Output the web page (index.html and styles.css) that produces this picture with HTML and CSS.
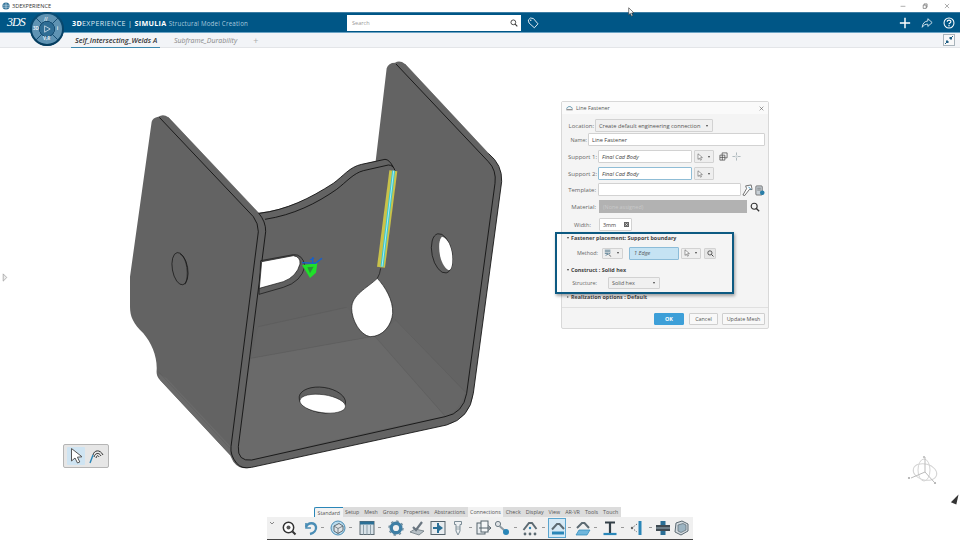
FILE: index.html
```html
<!DOCTYPE html>
<html lang="en">
<head>
  <meta charset="UTF-8" />
  <title>3DEXPERIENCE</title>
  <link rel="stylesheet" href="styles.css">
</head>
<body>

<svg class="defs" width="0" height="0">
  <symbol id="i-arrow" viewBox="0 0 10 10"><path d="M2.5 1 L2.5 8 L4.3 6.4 L5.6 9 L6.8 8.4 L5.6 5.9 L8 5.7 Z" fill="#fff" stroke="#555" stroke-width=".7"/></symbol>
  <symbol id="i-search" viewBox="0 0 12 12"><circle cx="5" cy="5" r="3.6" fill="none" stroke="#333" stroke-width="1.3"/><path d="M7.7 7.7 L11 11" stroke="#333" stroke-width="1.6"/></symbol>
</svg>

<div class="app">
  <div class="titlebar">
    <svg class="app-icon" viewBox="0 0 10 10"><circle cx="5" cy="5" r="4.5" fill="#2d6f96"/><path d="M1 4 H9 M1 6.5 H9 M5 .5 V9.5" stroke="#cfe2ee" stroke-width=".8"/></svg>
    <span class="app-name">3DEXPERIENCE</span>
    <div class="win-controls">
      <svg viewBox="0 0 10 10"><path d="M1 5.5 H9" stroke="#555" stroke-width=".8"/></svg>
      <svg viewBox="0 0 10 10"><path d="M2 3.5 H7 V9 H2 Z M3.5 3.5 V1.5 H8.5 V7 H7" fill="none" stroke="#444" stroke-width=".9"/></svg>
      <svg viewBox="0 0 10 10"><path d="M1.5 1.5 L8.5 8.5 M8.5 1.5 L1.5 8.5" stroke="#555" stroke-width=".8"/></svg>
    </div>
  </div>

  <div class="topbar">
    <span class="ds-logo">3DS</span>
    <div class="brand"><b>3D</b>EXPERIENCE <span class="pipe">|</span> <b>SIMULIA</b> <span class="app-title">Structural Model Creation</span></div>
    <div class="search">
      <span>Search</span>
      <svg class="search-icon" viewBox="0 0 12 12"><use href="#i-search"/></svg>
    </div>
    <svg class="tag-icon" viewBox="0 0 14 14"><path d="M1.5 3.5 L4 1.2 L7.5 1.8 L12.8 8 L8.6 12.6 L2.4 7 Z" fill="none" stroke="#fff" stroke-width="1"/><circle cx="4.4" cy="3.8" r=".8" fill="#fff"/></svg>
    <div class="top-actions">
      <svg viewBox="0 0 14 14"><path d="M7 1 V13 M1 7 H13" stroke="#fff" stroke-width="1.7"/></svg>
      <svg viewBox="0 0 14 14"><path d="M8 2 L13 6.5 L8 11 V8.4 C5 8.2 3 9.4 1.4 12 C1.8 7.6 4 5 8 4.6 Z" fill="none" stroke="#d4e4ee" stroke-width="1.1"/></svg>
      <svg viewBox="0 0 14 14"><circle cx="7" cy="7" r="5.8" fill="none" stroke="#fff" stroke-width="1.2"/><path d="M4.9 5.5 C4.9 3 9.2 3 9.2 5.5 C9.2 7.2 7 7 7 8.6" fill="none" stroke="#fff" stroke-width="1.3"/><circle cx="7" cy="10.3" r=".9" fill="#fff"/></svg>
    </div>
  </div>

  <div class="tabs">
    <div class="tab active">Self_Intersecting_Welds A</div>
    <div class="tab">Subframe_Durability</div>
    <span class="tab-add">+</span>
    <svg class="collapse-icon" viewBox="0 0 12 12"><rect x=".5" y=".5" width="11" height="11" fill="#f8f8f8" stroke="#a9b4bb"/><path d="M2 10 L5 7 M3 7 H5 V9 Z" stroke="#1f5f85" fill="#1f5f85"/><path d="M10 2 L7 5 M9 5 H7 V3 Z" stroke="#1f5f85" fill="#1f5f85"/></svg>
  </div>

  <div class="compass">
    <div class="compass-inner">
      <svg class="c-lines" viewBox="0 0 30 30"><path d="M4 4 L10 10 M26 4 L20 10 M4 26 L10 20 M26 26 L20 20" stroke="#174f74" stroke-width="1"/></svg>
      <span class="c-top">//</span>
      <span class="c-left">3D</span>
      <span class="c-right">i</span>
      <span class="c-bottom">V,R</span>
      <svg class="c-play" viewBox="0 0 10 10"><path d="M2 1 L9 5 L2 9 Z" fill="none" stroke="#e4eef4" stroke-width=".9"/></svg>
    </div>
  </div>

  <div class="viewport">
    <svg class="part" viewBox="0 0 1170 1290">
      <!-- silhouette -->
      <path fill="#636363" d="M65 215 Q68 203 85 200 Q100 190 115 202 L385 488 C470 480 540 445 610 400 C640 378 660 350 695 343 L737 333 L770 55 Q775 38 795 38 Q810 30 825 42 L1075 310 Q1118 345 1115 395 L1030 1030 Q1020 1105 950 1125 L365 1252 Q330 1262 310 1235 L300 1215 L90 990 Q78 980 80 960 C82 920 65 880 40 850 C10 820 0 800 0 770 L0 680 Z"/>
      <!-- floor and bends -->
      <path fill="#6a6a6a" d="M362 925 L735 858 L945 1098 Q600 1170 365 1230 Q322 1235 325 1190 Z"/>
      <path fill="#656565" d="M385 830 L650 772 L735 858 L362 925 Z"/>
      <path fill="#666" d="M735 858 L800 810 L1005 1025 Q990 1085 945 1098 Z"/>
      <path fill="#6a6a6a" d="M85 970 L110 985 L303 1190 L300 1215 L90 990 Z"/>
      <!-- faint bend lines -->
      <g fill="none" stroke="#4f4f4f" stroke-width="1.5" opacity=".45">
        <path d="M385 830 L650 772"/>
        <path d="M362 925 L735 858"/>
        <path d="M735 860 L945 1098"/>
        <path d="M795 808 L1005 1025"/>
        <path d="M85 965 L300 1195"/>
      </g>
      <!-- sheet edges -->
      <g fill="none" stroke="#0c0c0c" stroke-width="2.5">
        <path d="M88 202 L370 500 Q385 520 385 545 L303 1190 Q300 1215 320 1240 Q335 1258 365 1252 L950 1125 Q1020 1105 1030 1030 L1115 395 Q1118 345 1075 310"/>
        <path d="M385 488 Q408 515 407 545 L325 1190 Q322 1235 365 1230 L945 1100 Q1000 1090 1010 1030 L1095 400 Q1100 360 1075 335 L798 42"/>
        <path d="M388 490 C470 480 540 445 610 400 C640 378 660 350 695 343 L765 328 Q778 328 790 352"/>
        <path d="M405 508 C490 495 560 460 620 418 C650 395 670 370 700 362 L775 345 Q790 345 795 362"/>
      </g>
      <g fill="none" stroke="#4a4a4a" stroke-width="1.5">
        <path d="M115 202 L385 488"/>
        <path d="M825 42 L1075 310"/>
      </g>
      <!-- left hole -->
      <ellipse cx="150" cy="656" rx="23" ry="49" transform="rotate(-10 150 656)" fill="#616161" stroke="#111" stroke-width="2"/>
      <path d="M150 612 C172 622 178 680 165 703" fill="none" stroke="#111" stroke-width="1.8"/>
      <!-- right hole -->
      <ellipse cx="936" cy="610" rx="30" ry="60" transform="rotate(-12 936 610)" fill="#606060" stroke="#111" stroke-width="2"/>
      <path fill="#fff" d="M936 560 C956 565 969 600 967 635 C966 650 962 662 955 660 C935 650 925 610 928 580 Q930 565 936 560 Z"/>
      <!-- slot -->
      <path fill="#606060" stroke="#111" stroke-width="2" d="M392 632 L490 614 Q518 612 525 648 Q515 695 460 712 L387 733 Z"/>
      <path fill="#fff" stroke="#111" stroke-width="2" d="M395 635 L490 617 Q512 620 510 642 Q500 680 460 695 L388 715 Z"/>
      <!-- teardrop -->
      <path fill="#fff" stroke="#111" stroke-width="2" d="M742 685 C765 710 790 750 788 790 C785 825 760 860 720 860 C690 855 665 810 665 775 C665 735 710 715 742 685 Z"/>
      <path fill="none" stroke="#111" stroke-width="2" d="M752 655 Q750 672 742 685"/>
      <!-- bottom hole -->
      <ellipse cx="577" cy="1050" rx="70" ry="38" transform="rotate(8 577 1050)" fill="#606060" stroke="#111" stroke-width="2"/>
      <ellipse cx="578" cy="1061" rx="69" ry="27" transform="rotate(8 578 1061)" fill="#fff" stroke="#111" stroke-width="1.5"/>
      <!-- selected edge -->
      <path d="M790 362 L753 652" stroke="#c9c24a" stroke-width="24"/>
      <path d="M791 362 L756 650" stroke="#37c8d2" stroke-width="9"/>
      <path d="M791 362 L756 650" stroke="#c8f2f4" stroke-width="2.5"/>
      <!-- triad -->
      <path d="M516 645 L562 640 L558 668 L540 684 Z" fill="#1fe02a"/>
      <path d="M532 652 L551 650 L540 670 Z" fill="#2f8f3a"/>
      <path d="M516 638 L556 640 L576 625 M548 622 V640 M540 630 L552 624" fill="none" stroke="#1560d0" stroke-width="4"/>
    </svg>

    <svg class="edge-arrow" viewBox="0 0 6 10"><path d="M1 1 L5 5 L1 9 Z" fill="#eee" stroke="#999" stroke-width=".8"/></svg>

    <div class="select-bar">
      <div class="select-btn on"><svg viewBox="0 0 18 18"><path d="M4.5 1.5 L4.5 14 L8 11 L10.5 16 L12.8 15 L10.4 10.2 L15 9.8 Z" fill="#fff" stroke="#555" stroke-width="1"/></svg></div>
      <div class="select-btn"><svg viewBox="0 0 18 18"><path d="M6 8 C7 3 13 2 16 8 M7 10 C8 6 12 5 14 9 M9 11 C10 8 11 8 12 10" fill="none" stroke="#333" stroke-width="1"/><path d="M3 16 L6 8" stroke="#2a86b8" stroke-width="1.4"/></svg></div>
    </div>

    <svg class="robot" viewBox="0 0 40 40">
      <g fill="none" stroke="#d4d4d4">
        <ellipse cx="20" cy="20" rx="12" ry="8" transform="rotate(15 20 20)"/>
        <ellipse cx="19" cy="18" rx="6" ry="11"/>
        <path d="M20 20 V5 M20 20 L6 26 M20 20 L29 30" stroke="#bbb"/>
      </g>
      <circle cx="19" cy="5" r="1.1" fill="#bbb"/><circle cx="4" cy="26" r="1.1" fill="#aaa"/><circle cx="30" cy="31" r="1.1" fill="#aaa"/>
    </svg>
    <svg class="corner-arrow" viewBox="0 0 10 12"><path d="M9.5 .5 L1 9 L7 11.5 Z" fill="#333"/></svg>

    <div class="dialog">
      <div class="dlg-title">
        <svg viewBox="0 0 10 8"><path d="M1 5 C2 1 8 1 9 5" fill="none" stroke="#3a7f9e" stroke-width="1.2"/><path d="M.5 6.5 H9.5" stroke="#555" stroke-width="1.2"/></svg>
        <span>Line Fastener</span>
        <svg class="dlg-close" viewBox="0 0 8 8"><path d="M1 1 L7 7 M7 1 L1 7" stroke="#555" stroke-width=".9"/></svg>
      </div>

      <div class="row row-location">
        <label class="lbl lbl-loc">Location:</label>
        <div class="combo combo-loc"><span>Create default engineering connection</span><i class="caret"></i></div>
      </div>
      <div class="row row-name">
        <label class="lbl lbl-name">Name:</label>
        <div class="field field-name">Line Fastener</div>
      </div>
      <div class="row row-s1">
        <label class="lbl">Support 1:</label>
        <div class="field field-support"><em>Final Cad Body</em></div>
        <div class="pick"><svg viewBox="0 0 10 10"><use href="#i-arrow"/></svg><i class="caret"></i></div>
        <svg class="mini first" viewBox="0 0 10 10"><path d="M1 3.5 H6.5 V9 H1 Z M3.5 3.5 V1 H9 V6.5 H6.5 M1 6 H6.5 M3.7 3.5 V9" fill="none" stroke="#444" stroke-width=".8"/></svg>
        <svg class="mini" viewBox="0 0 10 10"><path d="M5 .5 V3.5 M5 6.5 V9.5 M.5 5 H3.5 M6.5 5 H9.5" stroke="#a8b3b8" stroke-width="1"/><rect x="3.8" y="3.8" width="2.4" height="2.4" fill="#ccd3d6"/></svg>
      </div>
      <div class="row row-s2">
        <label class="lbl">Support 2:</label>
        <div class="field field-support focus"><em>Final Cad Body</em></div>
        <div class="pick"><svg viewBox="0 0 10 10"><use href="#i-arrow"/></svg><i class="caret"></i></div>
      </div>
      <div class="row row-template">
        <label class="lbl">Template:</label>
        <div class="field field-template"></div>
        <svg class="mini-lg" viewBox="0 0 12 13"><path d="M1 12 L5 5 L4 2 L10 1 L11 6 L8 6 L3 12.5 Z" fill="#fff" stroke="#444" stroke-width=".8"/><path d="M7 3 L10 6" stroke="#2a86b8"/></svg>
        <svg class="mini-lg" viewBox="0 0 12 13"><rect x="2" y="2" width="7" height="10" rx="1" fill="#c8d0d6" stroke="#555" stroke-width=".8"/><path d="M3.5 4.5 H7.5 M3.5 6.5 H7.5" stroke="#555" stroke-width=".7"/><circle cx="9" cy="9.5" r="2.5" fill="#2a7ea8"/></svg>
      </div>
      <div class="row row-material">
        <label class="lbl">Material:</label>
        <div class="field-disabled">(None assigned)</div>
        <svg class="mat-search" viewBox="0 0 12 12"><use href="#i-search"/></svg>
      </div>
      <div class="row row-width">
        <label class="lbl lbl-width">Width:</label>
        <div class="field field-width"><span>3mm</span><svg viewBox="0 0 6 6"><rect width="6" height="6" fill="#666"/><path d="M1.5 1.5 L4.5 4.5 M4.5 1.5 L1.5 4.5" stroke="#fff" stroke-width=".7"/></svg></div>
      </div>

      <div class="row section row-place"><i class="tri"></i>Fastener placement: Support boundary</div>
      <div class="row row-method">
        <label class="lbl lbl-method">Method:</label>
        <div class="pick method-pick"><svg viewBox="0 0 10 10"><path d="M1 1.5 H8 M1 3.5 H8 M1 5.5 H5 M2 8 L8 5" stroke="#35617a" stroke-width=".9"/><path d="M6 7 L9 9.5" stroke="#444" stroke-width=".9"/></svg><i class="caret"></i></div>
        <div class="field-edge"><em>1 Edge</em></div>
        <div class="pick edge-pick"><svg viewBox="0 0 10 10"><use href="#i-arrow"/></svg><i class="caret"></i></div>
        <div class="find"><svg viewBox="0 0 12 12"><use href="#i-search"/></svg></div>
      </div>
      <div class="row section row-construct"><i class="tri"></i>Construct : Solid hex</div>
      <div class="row row-structure">
        <label class="lbl lbl-structure">Structure:</label>
        <div class="combo combo-structure"><span>Solid hex</span><i class="caret"></i></div>
      </div>
      <div class="row section row-real"><i class="tri closed"></i>Realization options : Default</div>

      <div class="dlg-footer">
        <button class="btn btn-ok">OK</button>
        <button class="btn btn-cancel">Cancel</button>
        <button class="btn btn-update">Update Mesh</button>
      </div>

      <div class="highlight"></div>
    </div>

    <div class="action-bar">
      <div class="action-tabs">
        <span class="a-tab on first">Standard</span>
        <span class="a-tab">Setup</span>
        <span class="a-tab">Mesh</span>
        <span class="a-tab">Group</span>
        <span class="a-tab">Properties</span>
        <span class="a-tab">Abstractions</span>
        <span class="a-tab on">Connections</span>
        <span class="a-tab">Check</span>
        <span class="a-tab">Display</span>
        <span class="a-tab">View</span>
        <span class="a-tab">AR-VR</span>
        <span class="a-tab">Tools</span>
        <span class="a-tab">Touch</span>
      </div>
      <div class="tools">
        <svg class="chev" viewBox="0 0 8 16"><path d="M2 2 L4 4 L6 2" fill="none" stroke="#888"/></svg>
        <svg class="tool m5" viewBox="0 0 16 16"><circle cx="7.5" cy="7.5" r="5.2" fill="#fff" stroke="#333" stroke-width="1.5"/><circle cx="7.5" cy="7.5" r="2" fill="#555"/><path d="M11.5 11.5 L14.5 14.5" stroke="#333" stroke-width="2"/></svg>
        <svg class="tool m5" viewBox="0 0 16 16"><path d="M4 3 V8 H9" fill="none" stroke="#4a8db5" stroke-width="1.6"/><path d="M4 7 C6 2 13 2 14 7 C14.5 10 12 13 8 14" fill="none" stroke="#4a8db5" stroke-width="2.4"/></svg>
        <i class="t-caret m1"></i>
        <svg class="tool m4" viewBox="0 0 16 16"><circle cx="8" cy="8" r="7" fill="#b9dbee" stroke="#4a8db5"/><path d="M4 6 L9 3.5 L13 6 V10.5 L8 13.5 L4 11 Z" fill="#dfe3e6" stroke="#5d6b73"/><path d="M4 6 L8 8.5 L13 6 M8 8.5 V13.5" fill="none" stroke="#5d6b73" stroke-width=".8"/></svg>
        <i class="t-caret m1"></i>
        <svg class="tool m5" viewBox="0 0 16 16"><rect x="1" y="1.5" width="14" height="13" fill="#d8e2e8" stroke="#5d6b73"/><rect x="1" y="1.5" width="14" height="3" fill="#2a6f96"/><path d="M4.5 4.5 V14.5 M8 4.5 V14.5 M11.5 4.5 V14.5" stroke="#8fa0aa"/></svg>
        <i class="t-caret m1"></i>
        <svg class="tool m5" viewBox="0 0 16 16"><circle cx="8" cy="8" r="4.8" fill="none" stroke="#3f7fa5" stroke-width="3.4"/><circle cx="8" cy="8" r="7" fill="none" stroke="#6d8b9d" stroke-width="1.4" stroke-dasharray="2.5 3"/></svg>
        <svg class="tool m5" viewBox="0 0 16 16"><path d="M1 12 L6 9 L15 11 L10 15 Z" fill="#b7c0c6" stroke="#5d6b73" stroke-width=".7"/><path d="M4 7 L7 10 L13 2" fill="none" stroke="#6a7680" stroke-width="2.2"/></svg>
        <svg class="tool m5" viewBox="0 0 16 16"><rect x="1" y="1.5" width="14" height="13" fill="#e8ecef" stroke="#56646d"/><path d="M8 3 V13 M3 8 H8" stroke="#2a6f96" stroke-width="2"/><path d="M9 5 L13 8 L9 11 Z" fill="#2a6f96"/></svg>
        <svg class="tool m4" viewBox="0 0 16 16"><path d="M4.5 1.5 H11.5 V4.5 H10 V11 L8 15 L6 11 V4.5 H4.5 Z" fill="#eef1f3" stroke="#7d8d97"/><path d="M6 7 H10 M6 9 H10" stroke="#7d8d97" stroke-width=".7"/></svg>
        <i class="t-caret m1"></i>
        <svg class="tool m2" viewBox="0 0 16 16"><rect x="1" y="3" width="8" height="11" fill="#e8ecef" stroke="#56646d"/><rect x="5" y="1" width="7" height="11" fill="#f4f6f7" stroke="#56646d"/><path d="M3 8 H15 M12 5.5 L15 8 L12 10.5" fill="none" stroke="#56646d"/></svg>
        <svg class="tool m2" viewBox="0 0 16 16"><circle cx="4" cy="4" r="2.6" fill="#dfe3e6" stroke="#6c7a83"/><path d="M5.5 6 L10.5 10.5" stroke="#8e9ba3" stroke-width="2"/><circle cx="12" cy="12" r="3" fill="#2a86b8"/></svg>
        <i class="t-caret m2"></i>
        <svg class="tool m3" viewBox="0 0 16 16"><path d="M1.5 10 L7 3 L10 3 L14.5 9" fill="none" stroke="#5d6b73" stroke-width="2"/><circle cx="3" cy="14" r="1.4" fill="#5d6b73"/><circle cx="8" cy="14" r="1.4" fill="#5d6b73"/><circle cx="13" cy="14" r="1.4" fill="#5d6b73"/><circle cx="8" cy="8" r="1.2" fill="#2a86b8"/></svg>
        <i class="t-caret m2"></i>
        <div class="tool-on m1"><svg viewBox="0 0 16 16"><path d="M2 8.5 L7 3 L9.5 3 L14 8" fill="none" stroke="#5d6b73" stroke-width="2"/><path d="M2 12 H14" stroke="#2a86b8" stroke-width="3"/></svg></div>
        <i class="t-caret"></i>
        <svg class="tool m2" viewBox="0 0 16 16"><path d="M2 8 L7 3 L9.5 3 L14 8" fill="none" stroke="#5d6b73" stroke-width="2"/><path d="M4 10 H15 L12 15 H1 Z" fill="#6fb6dc" stroke="#2a86b8" stroke-width=".7"/></svg>
        <i class="t-caret m1"></i>
        <svg class="tool m3" viewBox="0 0 16 16"><path d="M3 2.5 H13 M8 2.5 V13.5" stroke="#333f47" stroke-width="2.2"/><path d="M1.5 14 H14.5" stroke="#2a86b8" stroke-width="2.2"/></svg>
        <i class="t-caret m1"></i>
        <svg class="tool m4" viewBox="0 0 16 16"><path d="M10 1 V15" stroke="#2a86b8" stroke-width="3"/><path d="M7 4 L2 8 L7 12" fill="none" stroke="#666" stroke-width="1" stroke-dasharray="1.5 1.5"/><circle cx="2" cy="8" r="1.2" fill="#666"/></svg>
        <i class="t-caret m1"></i>
        <svg class="tool m1" viewBox="0 0 16 16"><rect x="5.5" y="1" width="5" height="14" fill="#2a6f96"/><rect x="1" y="5" width="14" height="6" fill="#3f4a52"/><path d="M1 8 H15" stroke="#9fb2bd"/></svg>
        <svg class="tool m2" viewBox="0 0 16 16"><path d="M3 3 L9 1 L15 4 V11 L8 15 L2 12 Z" fill="#d3dadf" stroke="#5d6b73"/><path d="M5 5 L10 3.5 L13 5 V10 L8 12.5 L5 11 Z" fill="#9cb4c2" stroke="#5d6b73" stroke-width=".7"/></svg>
      </div>
    </div>
  </div>
</div>

<svg class="cursor" viewBox="0 0 10 14"><path d="M1 1 V11 L3.4 9 L5 13 L6.8 12.2 L5.2 8.4 L8.4 8.2 Z" fill="#fff" stroke="#333" stroke-width=".9"/></svg>

</body>
</html>
```

FILE: styles.css
```css
body {
  margin: 0;
  font-family: 'Open Sans', sans-serif;
  background-color: white;
  overflow: hidden;
}
.defs {
  position: absolute;
}
.app {
  display: flex;
  flex-direction: column;
  width: 960px;
  height: 540px;
  position: relative;
}

/* window title */
.titlebar {
  display: flex;
  align-items: center;
  height: 12px;
  padding-left: 2px;
  color: #333;
  font-size: 5.6px;
}
.app-icon {
  width: 8px;
  height: 8px;
  margin-right: 2px;
}
.win-controls {
  display: flex;
  margin-left: auto;
  margin-right: 10px;
  gap: 16px;
}
.win-controls svg {
  width: 6px;
  height: 6px;
}

/* blue bar */
.topbar {
  display: flex;
  align-items: center;
  height: 21px;
  background-color: #005686;
  border-top: 1px solid #3d7da3;
  border-bottom: 1px solid #6ba3c4;
  box-sizing: border-box;
  color: white;
  position: relative;
}
.ds-logo {
  width: 72px;
  padding-left: 7px;
  box-sizing: border-box;
  font-family: 'Liberation Serif', serif;
  font-style: italic;
  font-size: 12px;
  letter-spacing: -1px;
}
.brand {
  width: 275px;
  font-size: 7.2px;
  letter-spacing: .3px;
  color: #dbe8f0;
  white-space: nowrap;
}
.brand b {
  color: white;
}
.app-title {
  color: #a9c9dd;
  font-size: 6.2px;
  letter-spacing: .2px;
}
.search {
  display: flex;
  align-items: center;
  justify-content: space-between;
  width: 174px;
  height: 16px;
  padding: 0 3px 0 5px;
  box-sizing: border-box;
  background-color: white;
  color: #999;
  font-size: 5.6px;
}
.search-icon {
  width: 8px;
  height: 8px;
}
.tag-icon {
  width: 12px;
  height: 12px;
  margin-left: 6px;
}
.top-actions {
  display: flex;
  align-items: center;
  gap: 10px;
  margin-left: auto;
  margin-right: 5px;
}
.top-actions svg {
  width: 12px;
  height: 12px;
}

/* tabs */
.tabs {
  display: flex;
  height: 15px;
  padding-left: 71px;
  background-color: #f2f4f7;
  border-bottom: 1px solid #e3e5e8;
  box-sizing: border-box;
  font-size: 7px;
  font-style: italic;
  color: #888;
  align-items: center;
}
.tab {
  height: 100%;
  display: flex;
  align-items: center;
  margin-right: 14px;
  padding: 0;
}
.tab.active {
  font-size: 7.2px;
  font-weight: 600;
  color: #333;
  padding: 0 3px 0 4px;
  border-bottom: 1px solid #3b87ad;
  width: 82px;
  white-space: nowrap;
}
.tab-add {
  font-style: normal;
  font-size: 9px;
  color: #aaa;
  margin-left: 2px;
}
.collapse-icon {
  width: 12px;
  height: 12px;
  margin-left: auto;
  margin-right: 5px;
}

/* compass */
.compass {
  position: absolute;
  left: 30px;
  top: 12px;
  width: 34px;
  height: 34px;
  border-radius: 50%;
  background-color: #0b4f78;
  box-shadow: inset 0 -4px 6px #053a5a;
}
.compass-inner {
  position: absolute;
  inset: 2px;
  border-radius: 50%;
  background: radial-gradient(circle, #2f6d94 0 33%, #174f74 34% 37%, #5f93b3 38% 78%, #0d5078 86%);
  color: #e4eef4;
  font-size: 4.5px;
  font-weight: 700;
}
.c-lines {
  position: absolute;
  inset: 0;
}
.compass-inner span {
  position: absolute;
}
.c-top { left: 12px; top: 2px; }
.c-left { left: 1px; top: 11px; }
.c-right { right: 4px; top: 11px; }
.c-bottom { left: 11px; bottom: 3px; }
.c-play {
  position: absolute;
  left: 11px;
  top: 11px;
  width: 8px;
  height: 8px;
}

/* 3d area */
.viewport {
  flex: 1;
  position: relative;
}
.part {
  position: absolute;
  left: 130px;
  top: 2px;
  width: 390px;
  height: 430px;
  overflow: visible;
}
.edge-arrow {
  position: absolute;
  left: 2px;
  top: 225px;
  width: 6px;
  height: 9px;
}
.select-bar {
  position: absolute;
  left: 63px;
  top: 396px;
  display: flex;
  gap: 2px;
  padding: 2px 3px;
  background-color: #e6e6e6;
  border: 1px solid #b5b5b5;
  border-radius: 2px;
}
.select-btn {
  width: 18px;
  height: 18px;
}
.select-btn.on {
  background-color: #cfe4f2;
  border-radius: 1px;
}
.robot {
  position: absolute;
  left: 905px;
  top: 404px;
  width: 40px;
  height: 40px;
}
.corner-arrow {
  position: absolute;
  left: 950px;
  top: 446px;
  width: 9px;
  height: 11px;
}
.cursor {
  position: absolute;
  left: 628px;
  top: 7px;
  width: 7px;
  height: 10px;
}

/* dialog */
.dialog {
  position: absolute;
  left: 561px;
  top: 53px;
  width: 208px;
  height: 228px;
  background-color: #f4f4f4;
  border: 1px solid #d8d8d8;
  border-radius: 2px;
  box-sizing: border-box;
  font-size: 5.4px;
  color: #555;
}
.dlg-title {
  display: flex;
  align-items: center;
  height: 12px;
  padding: 0 4px 0 4px;
  gap: 3px;
  background-color: #fafafa;
}
.dlg-title svg {
  width: 7px;
  height: 6px;
}
.dlg-title .dlg-close {
  margin-left: auto;
  width: 5px;
  height: 5px;
}
.row {
  display: flex;
  align-items: center;
  height: 13px;
  padding-left: 6px;
}
.row-location { margin-top: 5px; }
.row-name { margin-top: 1px; }
.row-s1 { margin-top: 4px; }
.row-s2 { margin-top: 4px; }
.row-template { margin-top: 3px; }
.row-material { margin-top: 4px; }
.row-width { margin-top: 5px; }
.row-place { margin-top: 1px; height: 11px; }
.row-method { margin-top: 4px; height: 12px; }
.row-construct { margin-top: 6px; height: 10px; }
.row-structure { margin-top: 2px; height: 12px; }
.row-real { margin-top: 3px; height: 10px; }

.lbl {
  width: 28px;
  flex-shrink: 0;
  text-align: right;
  white-space: nowrap;
  margin-right: 1px;
  color: #666;
  font-size: 6px;
}
.lbl-loc { width: 26px; }
.lbl-name { width: 19px; font-size: 5.4px; }
.lbl-width { width: 23px; margin-right: 8px; font-size: 5.6px; }
.lbl-method { width: 30px; margin-right: 4px; font-size: 5.4px; }
.lbl-structure { width: 29px; margin-right: 11px; font-size: 5.4px; }

.field, .combo, .pick, .find, .field-edge {
  display: flex;
  align-items: center;
  box-sizing: border-box;
  height: 13px;
  background-color: white;
  border: 1px solid #d2d2d2;
  border-radius: 1px;
}
.field {
  padding-left: 3px;
  color: #444;
}
.combo {
  justify-content: space-between;
  background-color: #f0f0f0;
  padding: 0 4px 0 3px;
  color: #555;
}
.combo-loc { width: 118px; font-size: 5.7px; }
.combo-structure { width: 52px; height: 12px; }
.caret {
  width: 0;
  height: 0;
  border-left: 1.6px solid transparent;
  border-right: 1.6px solid transparent;
  border-top: 2.2px solid #444;
}
.field-name { width: 177px; font-size: 5.6px; }
.field-support { width: 94px; margin-left: 1px; font-size: 5.6px; }
.field-support.focus { border-color: #8fbdd6; }
.pick {
  justify-content: space-between;
  width: 20px;
  margin-left: 2px;
  padding: 0 3px 0 1px;
  background-color: #eeeeee;
}
.pick svg {
  width: 8px;
  height: 8px;
}
.mini {
  width: 9px;
  height: 9px;
  margin-left: 4px;
}
.mini.first { margin-left: 5px; }
.field-template { width: 143px; margin-left: 1px; margin-right: 1px; }
.mini-lg {
  width: 11px;
  height: 12px;
  margin-right: 1px;
}
.field-disabled {
  display: flex;
  align-items: center;
  width: 148px;
  height: 13px;
  margin-left: 2px;
  padding-left: 4px;
  box-sizing: border-box;
  background-color: #b2b2b2;
  color: #c9c9c9;
}
.mat-search {
  width: 10px;
  height: 10px;
  margin-left: 3px;
}
.field-width {
  justify-content: space-between;
  width: 33px;
  padding-right: 2px;
}
.field-width svg {
  width: 5px;
  height: 5px;
}
.section {
  padding-left: 5px;
  font-weight: 700;
  color: #444;
  white-space: nowrap;
}
.tri {
  width: 0;
  height: 0;
  margin-right: 2px;
  border-left: 1.5px solid transparent;
  border-right: 1.5px solid transparent;
  border-top: 2.5px solid #444;
}
.tri.closed {
  border-top: 1.5px solid transparent;
  border-bottom: 1.5px solid transparent;
  border-left: 2.5px solid #777;
  border-right: 0;
}
.method-pick { margin-left: 0; width: 21px; height: 11px; }
.field-edge {
  width: 50px;
  height: 13px;
  margin-left: 6px;
  padding-left: 4px;
  background-color: #c5e3f3;
  border-color: #8cbcd8;
  color: #555;
  font-size: 5.6px;
}
.edge-pick { width: 20px; height: 11px; margin-left: 2px; }
.find {
  justify-content: center;
  width: 12px;
  height: 11px;
  margin-left: 3px;
  background-color: #e6e6e6;
}
.find svg {
  width: 7px;
  height: 7px;
}
.dlg-footer {
  display: flex;
  align-items: center;
  justify-content: flex-end;
  gap: 4px;
  margin-top: 5px;
  padding: 5px 3px 0 0;
  border-top: 1px solid #e0e0e0;
}
.btn {
  height: 12px;
  padding: 0;
  box-sizing: border-box;
  background-color: #f8f8f8;
  border: 1px solid #cfcfcf;
  border-radius: 1px;
  font-family: 'Open Sans', sans-serif;
  font-size: 5.4px;
  color: #555;
}
.btn-ok {
  width: 30px;
  margin-right: 1px;
  background-color: #3d9fd8;
  border-color: #3d9fd8;
  color: white;
  font-weight: 700;
}
.btn-cancel { width: 29px; }
.btn-update { width: 43px; }
.highlight {
  position: absolute;
  left: -7px;
  top: 130px;
  width: 179px;
  height: 62px;
  box-sizing: border-box;
  border: 2px solid #0d5a82;
  box-shadow: 1px 2px 3px rgba(0, 0, 0, .35);
}

/* action bar */
.action-bar {
  position: absolute;
  left: 267px;
  top: 459px;
  width: 426px;
}
.action-tabs {
  display: flex;
  height: 10px;
  padding-left: 47px;
  font-size: 5.3px;
  color: #555;
}
.a-tab {
  display: flex;
  align-items: center;
  padding: 0 2.5px;
  background-color: #dcdcdc;
  white-space: nowrap;
}
.a-tab.on {
  background-color: #f2f2f2;
}
.a-tab.first {
  border-top-left-radius: 2px;
  border-top: 1px solid #2a86b8;
  border-left: 1px solid #2a86b8;
  box-sizing: border-box;
}
.tools {
  display: flex;
  align-items: center;
  height: 23px;
  padding-left: 1px;
  background-color: #f0f0f0;
  border-bottom: 1px solid #444;
  box-sizing: border-box;
}
.chev {
  width: 8px;
  height: 16px;
}
.tool {
  width: 16px;
  height: 16px;
  flex-shrink: 0;
}
.tool-on {
  width: 18px;
  height: 20px;
  box-sizing: border-box;
  padding: 1px;
  background-color: #d5e9f5;
  border: 1px solid #5aa5cf;
}
.tool-on svg {
  width: 16px;
  height: 16px;
}
.t-caret {
  width: 7px;
  height: 2px;
  flex-shrink: 0;
  position: relative;
}
.t-caret::after {
  content: "";
  position: absolute;
  left: 2px;
  top: 0;
  width: 3px;
  height: 1px;
  background-color: #999;
}
.m1 { margin-left: 1px; }
.m2 { margin-left: 2px; }
.m3 { margin-left: 3px; }
.m4 { margin-left: 4px; }
.m5 { margin-left: 5px; }
```
